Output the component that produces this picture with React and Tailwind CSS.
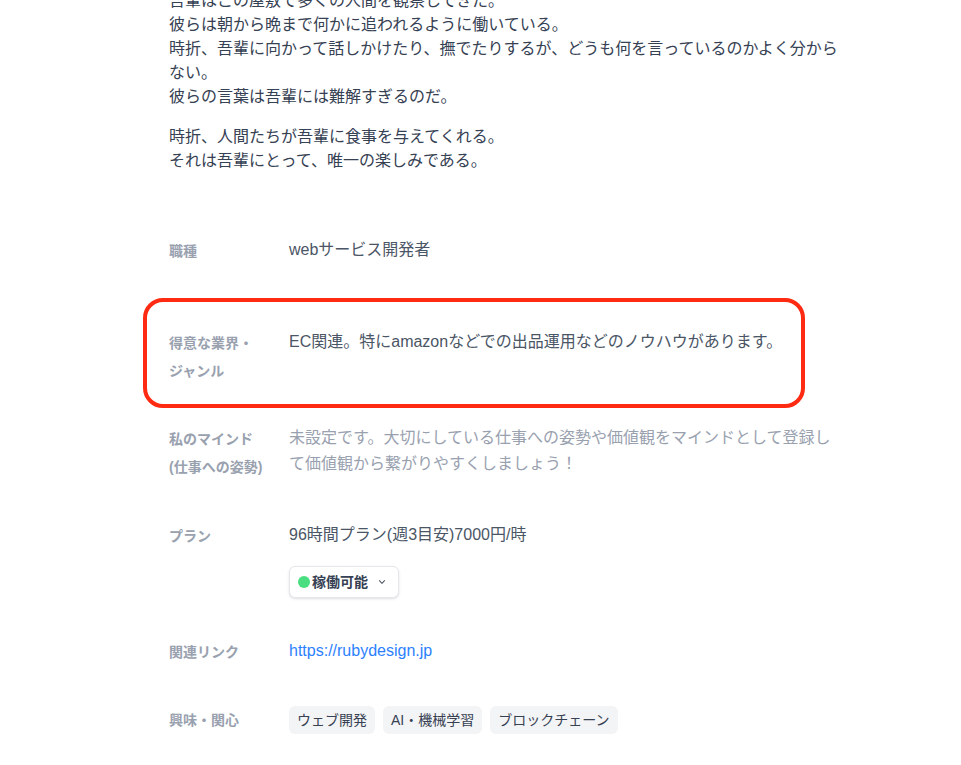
import React from "react";

const labelCSS = "w-[120px] shrink-0 text-sm font-bold leading-7 text-gray-400";
const valueCSS = "flex-1 text-base leading-[26px] text-gray-600";

const Row = ({ label, children, className = "" }) => (
  <div className={`relative flex ${className}`}>
    <dt className={labelCSS}>{label}</dt>
    <dd className={valueCSS}>{children}</dd>
  </div>
);

const App = () => {
  const tags = ["ウェブ開発", "AI・機械学習", "ブロックチェーン"];

  return (
    <main className="min-h-screen overflow-hidden bg-white font-['Liberation_Sans','Noto_Sans_CJK_JP',sans-serif]">
      <section className="ml-[169px] w-[672px]">
        {/* story (scrolled, first line sits under the top edge) */}
        <div className="-mt-[11px] text-base leading-6 text-gray-700">
          <p>
            吾輩はこの屋敷で多くの人間を観察してきた。
            <br />
            彼らは朝から晩まで何かに追われるように働いている。
            <br />
            時折、吾輩に向かって話しかけたり、撫でたりするが、どうも何を言っているのかよく分からない。
            <br />
            彼らの言葉は吾輩には難解すぎるのだ。
          </p>
          <p className="mt-4">
            時折、人間たちが吾輩に食事を与えてくれる。
            <br />
            それは吾輩にとって、唯一の楽しみである。
          </p>
        </div>

        {/* profile */}
        <dl className="mt-16 flex flex-col gap-10">
          <Row label="職種" className="mb-6">
            webサービス開発者
          </Row>

          <Row
            label={
              <>
                得意な業界・
                <br />
                ジャンル
              </>
            }
          >
            EC関連。特にamazonなどでの出品運用などのノウハウがあります。
            <div className="pointer-events-none absolute -left-[26px] -top-[31px] h-[110px] w-[662px] rounded-[20px] border-4 border-[#ff2a12]" />
          </Row>

          <Row
            label={
              <>
                私のマインド
                <br />
                (仕事への姿勢)
              </>
            }
          >
            <span className="text-gray-400">
              未設定です。大切にしている仕事への姿勢や価値観をマインドとして登録して価値観から繋がりやすくしましょう！
            </span>
          </Row>

          <Row label="プラン" className="pt-px">
            <p>96時間プラン(週3目安)7000円/時</p>
            <button className="mt-[18px] flex h-8 items-center rounded-md border border-gray-200 bg-white pl-2 pr-2.5 shadow-sm">
              <span className="h-3 w-3 rounded-full bg-[#4ade80]" />
              <span className="ml-0.5 text-sm font-bold text-gray-700">稼働可能</span>
              <svg className="ml-2 h-3 w-3 text-gray-700" viewBox="0 0 20 20" fill="currentColor">
                <path
                  fillRule="evenodd"
                  d="M5.23 7.21a.75.75 0 011.06.02L10 11.17l3.71-3.94a.75.75 0 111.08 1.04l-4.25 4.5a.75.75 0 01-1.08 0l-4.25-4.5a.75.75 0 01.02-1.06z"
                  clipRule="evenodd"
                />
              </svg>
            </button>
          </Row>

          <Row label="関連リンク">
            <a href="#" className="text-blue-500">
              https://rubydesign.jp
            </a>
          </Row>

          <Row label="興味・関心">
            <div className="flex gap-2">
              {tags.map((t) => (
                <span key={t} className="rounded-md bg-gray-100 px-2 py-1 text-sm leading-5 text-gray-700">
                  {t}
                </span>
              ))}
            </div>
          </Row>
        </dl>
      </section>
    </main>
  );
};

export default App;
